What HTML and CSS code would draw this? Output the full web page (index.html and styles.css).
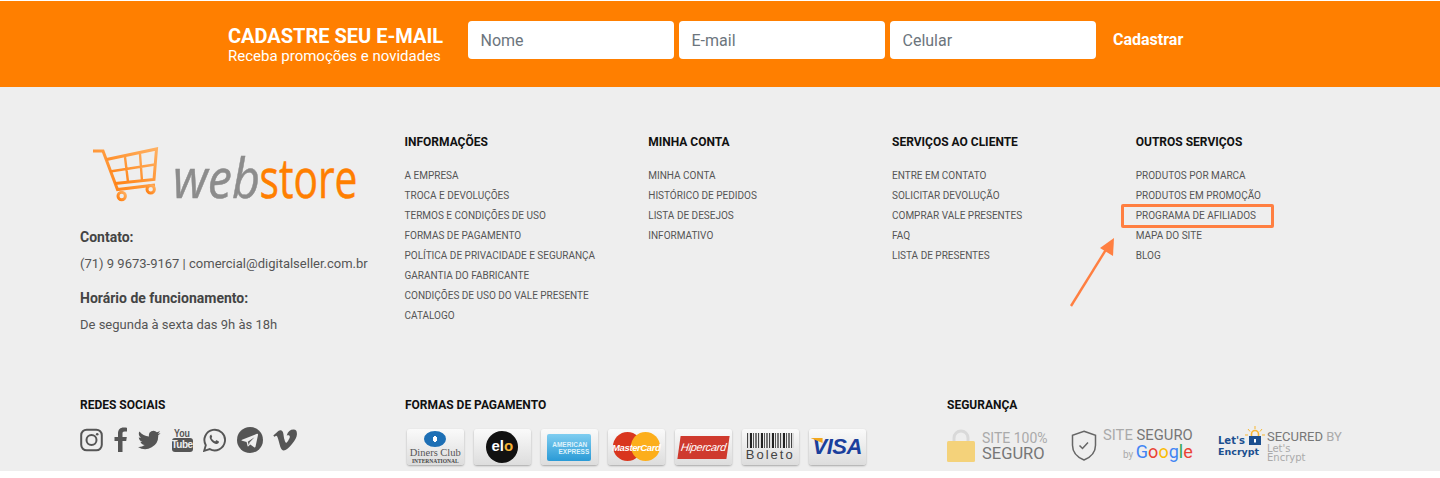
FILE: index.html
```html
<!DOCTYPE html>
<html lang="pt-BR">
<head>
  <meta charset="UTF-8">
  <title>Webstore</title>
  <link rel="stylesheet" href="styles.css">
</head>
<body>
  <!-- newsletter -->
  <section class="news">
    <div class="news-text">
      <h2>CADASTRE SEU E-MAIL</h2>
      <p>Receba promoções e novidades</p>
    </div>
    <form class="news-form">
      <input type="text" placeholder="Nome">
      <input type="text" placeholder="E-mail">
      <input type="text" placeholder="Celular">
      <button type="button">Cadastrar</button>
    </form>
  </section>

  <footer>
    <div class="top">
      <div class="about">
        <svg class="logo" width="280" height="60" viewBox="0 0 280 60">
          <defs>
            <linearGradient id="cart" x1="1" y1="0" x2="0" y2="1">
              <stop offset="0" stop-color="#ffb061"/>
              <stop offset="1" stop-color="#ff7f10"/>
            </linearGradient>
          </defs>
          <g fill="none" stroke="url(#cart)" stroke-width="3">
            <path d="M1 3h10l14.500 38.500L63 37"/>
            <path d="M14.500 11.500L64.500 1 62 31.500 23 35.500"/>
            <path d="M18 23.500L63 16.500M33 9l3 25M48 6l2 27" stroke-width="2.400"/>
            <circle cx="29.700" cy="48" r="3.700"/>
            <circle cx="58.700" cy="41.300" r="3.700"/>
          </g>
          <text x="81" y="50" class="logo-word logo-web" textLength="87" lengthAdjust="spacingAndGlyphs">web</text>
          <text x="167.500" y="50" class="logo-word logo-store" textLength="98" lengthAdjust="spacingAndGlyphs">store</text>
        </svg>
        <h4>Contato:</h4>
        <p>(71) 9 9673-9167 | comercial@digitalseller.com.br</p>
        <h4 class="hours">Horário de funcionamento:</h4>
        <p>De segunda à sexta das 9h às 18h</p>
      </div>

      <div class="col">
        <h5>Informações</h5>
        <ul>
          <li>A empresa</li>
          <li>Troca e devoluções</li>
          <li>Termos e condições de uso</li>
          <li>Formas de pagamento</li>
          <li>Política de privacidade e segurança</li>
          <li>Garantia do fabricante</li>
          <li>Condições de uso do vale presente</li>
          <li>Catalogo</li>
        </ul>
      </div>
      <div class="col">
        <h5>Minha conta</h5>
        <ul>
          <li>Minha conta</li>
          <li>Histórico de pedidos</li>
          <li>Lista de desejos</li>
          <li>Informativo</li>
        </ul>
      </div>
      <div class="col">
        <h5>Serviços ao cliente</h5>
        <ul>
          <li>Entre em contato</li>
          <li>Solicitar devolução</li>
          <li>Comprar vale presentes</li>
          <li>FAQ</li>
          <li>Lista de presentes</li>
        </ul>
      </div>
      <div class="col">
        <h5>Outros serviços</h5>
        <ul>
          <li>Produtos por marca</li>
          <li>Produtos em promoção</li>
          <li class="marked">Programa de afiliados</li>
          <li>Mapa do site</li>
          <li>Blog</li>
        </ul>
      </div>
    </div>

    <div class="bottom">
      <div class="social">
        <h5>Redes sociais</h5>
        <div class="icons">
          <svg width="23" height="24" viewBox="0 0 23 24"><rect x="1.200" y="1.700" width="20.600" height="20.600" rx="5.500" fill="none" stroke="#555" stroke-width="2"/><circle cx="11.500" cy="12" r="5" fill="none" stroke="#555" stroke-width="2"/><circle cx="17.200" cy="6.300" r="1.300" fill="#555"/></svg>
          <svg width="14" height="26" viewBox="0 0 14 26"><path d="M4 25V14H.500v-4H4V6.500C4 2.500 6.300.500 9.500.500c1.500 0 3 .1 3.500.2v3.800h-2.300c-1.800 0-2.200.9-2.200 2.100V10h4.300l-.6 4H8.500v11z" fill="#555"/></svg>
          <svg width="23" height="20" viewBox="0 0 24 20"><path d="M23.500 2.600c-.9.400-1.800.7-2.800.8 1-.6 1.800-1.500 2.100-2.700-.9.600-2 1-3.100 1.200A4.800 4.800 0 0 0 11.500 6.300C7.500 6.100 3.900 4.200 1.500 1.200.2 3.400.9 6.200 3 7.600c-.8 0-1.500-.2-2.200-.6 0 2.300 1.700 4.300 3.900 4.800-.7.200-1.500.2-2.200.1.600 2 2.400 3.300 4.500 3.400A9.700 9.700 0 0 1 0 17.300 13.700 13.700 0 0 0 21.100 5.100c1-.7 1.800-1.500 2.400-2.500z" fill="#555"/></svg>
          <span class="yt"><span class="yt-you">You</span><span class="yt-tube">Tube</span></span>
          <svg width="23" height="24" viewBox="0 0 23 24"><path d="M1.200 22.800l1.600-5.600a10.300 10.300 0 1 1 4 3.900z" fill="none" stroke="#555" stroke-width="1.900"/><path d="M8.400 6.700c-.5 0-1.300.3-1.600 1.400-.4 1.300.1 2.900 1.200 4.400 1.300 1.700 3 3 5 3.500 1.300.3 2.500-.4 2.800-1.400.2-.6.200-1 .1-1.200l-2.200-1.100c-.3-.1-.5 0-.7.200l-.8 1c-1.700-.7-3-1.900-3.800-3.400l.6-.8c.2-.2.200-.5.100-.7l-.9-2c-.1-.1-.3-.2-.5-.2z" fill="#555"/></svg>
          <svg width="26" height="26" viewBox="0 0 26 26"><circle cx="13" cy="13" r="13" fill="#555"/><path d="M5 12.700l15-5.900c.7-.2 1.200.2 1 1.100l-2.500 11.800c-.2.800-.7 1-1.400.6l-3.800-2.800-1.900 1.800c-.4.400-.8.300-.9-.2l-.9-4.100-4.500-1.300c-.9-.3-.9-.8 0-1z" fill="#eee"/><path d="M10.800 14.800l6.700-4.600-5 5.400-.6 2.700z" fill="#555"/></svg>
          <svg width="24" height="22" viewBox="0 0 24 22"><path d="M23.900 5.400c-.1 2.300-1.700 5.500-4.900 9.600-3.300 4.300-6 6.400-8.300 6.400-1.400 0-2.600-1.300-3.500-3.900L5.300 10.600C4.700 8 4 6.700 3.200 6.700c-.2 0-.8.400-1.800 1.100L.3 6.400 3.700 3.400C5.200 2.100 6.400 1.400 7.100 1.300c1.800-.2 2.900 1 3.300 3.600.4 2.900.8 4.700 1 5.400.5 2.300 1.100 3.500 1.700 3.500.5 0 1.200-.8 2.200-2.300.9-1.500 1.400-2.600 1.500-3.400.1-1.300-.4-1.900-1.500-1.900-.5 0-1.100.1-1.600.4C15 2.400 17.400.500 20.700.600c2.400.1 3.400 1.700 3.200 4.800z" fill="#555"/></svg>
        </div>
      </div>

      <div class="payment">
        <h5>Formas de pagamento</h5>
        <div class="cards">
          <div class="card diners">
            <span class="diners-logo"></span>
            <span class="diners-name">Diners Club</span>
            <span class="diners-sub">INTERNATIONAL</span>
          </div>
          <div class="card"><span class="elo">el<i>o</i></span></div>
          <div class="card"><span class="amex"><span>AMERICAN</span><span class="amex-low">EXPRESS</span></span></div>
          <div class="card">
            <span class="mc-red"></span><span class="mc-yellow"></span>
            <span class="mc-text">MasterCard</span>
          </div>
          <div class="card"><span class="hiper"><span>Hipercard</span></span></div>
          <div class="card boleto">
            <span class="bars"></span>
            <span class="boleto-text">Boleto</span>
          </div>
          <div class="card"><span class="visa">VISA</span></div>
        </div>
      </div>

      <div class="security">
        <h5>Segurança</h5>
        <div class="seals">
          <div class="seal seal-site">
            <svg width="28" height="33" viewBox="0 0 28 33"><path d="M7 14V9a7 7 0 0 1 14 0v5" fill="none" stroke="#d9d9d9" stroke-width="3"/><rect y="12" width="28" height="21" rx="1.500" fill="#f4d27a"/></svg>
            <div class="seal-text"><span class="light site-100">SITE 100%</span><span class="big">SEGURO</span></div>
          </div>
          <div class="seal seal-google">
            <svg width="26" height="31" viewBox="0 0 26 31"><path d="M13 1.200l11.500 4v10c0 7-4.800 12-11.500 14.800C6.300 27.200 1.500 22.200 1.500 15.200v-10z" fill="none" stroke="#666" stroke-width="1.500"/><path d="M8.500 15.500l3 3 5.500-6" fill="none" stroke="#666" stroke-width="1.500"/></svg>
            <div class="seal-text right">
              <span class="site-seguro"><span class="light">SITE</span> SEGURO</span>
              <span class="by">by <b class="g-blue">G</b><b class="g-red">o</b><b class="g-yellow">o</b><b class="g-blue">g</b><b class="g-green">l</b><b class="g-red">e</b></span>
            </div>
          </div>
          <div class="seal seal-le">
            <div class="le-logo">
              <span class="le-word">Let's</span>
              <svg class="le-lock" width="20" height="20" viewBox="0 0 20 20"><path d="M10 0v3M3 3l2 2.500M17 3l-2 2.500M0 9h3M17 9h3" stroke="#f7b733" stroke-width="1"/><path d="M6.500 10V8a3.500 3.500 0 0 1 7 0v2" fill="none" stroke="#f7b733" stroke-width="1.600"/><rect x="4" y="10" width="12" height="9" fill="#1b4f8f"/><rect x="9" y="13" width="2" height="3.500" fill="#fff"/></svg>
              <span class="le-word le-enc">Encrypt</span>
            </div>
            <div class="seal-text le-text"><span class="secured">SECURED <span class="light">BY</span></span><span class="le-small">Let's<br>Encrypt</span></div>
          </div>
        </div>
      </div>
    </div>
  </footer>

  <!-- seta de destaque -->
  <svg class="arrow" width="50" height="72" viewBox="0 0 50 72"><path d="M2 70L38 12" stroke="#ff7f41" stroke-width="2.400" fill="none"/><path d="M45 2l-1 18-13-8z" fill="#ff7f41"/></svg>
</body>
</html>
```

FILE: styles.css
```css
* {
  box-sizing: border-box;
  margin: 0;
  padding: 0;
}
body {
  position: relative;
  height: 478px;
  overflow: hidden;
  background: #fff;
  font-family: Roboto, sans-serif;
  color: #444;
}
/* newsletter */
.news {
  display: flex;
  align-items: center;
  height: 86px;
  margin-top: 1px;
  padding: 0 0 9px 228px;
  background: #ff7f00;
  color: #fff;
}
.news-text {
  width: 240px;
  margin-top: 9px;
}
.news-text h2 {
  font-size: 20px;
  line-height: 24px;
  font-weight: 700;
}
.news-text p {
  font-size: 15px;
  line-height: 17px;
}
.news-form {
  display: flex;
  gap: 5px;
}
.news-form input {
  width: 206px;
  height: 38px;
  padding: 2px 13px 0 12.500px;
  border: none;
  border-radius: 4px;
  background: #fff;
  font: 16px Roboto, sans-serif;
}
.news-form input::placeholder {
  color: #6c757d;
}
.news-form button {
  margin-left: 12px;
  border: none;
  background: none;
  color: #fff;
  font: 700 16px Roboto, sans-serif;
}
/* rodape */
footer {
  height: 384px;
  background: #eee;
}
.top {
  display: flex;
  height: 311px;
  padding: 48px 0 0 80px;
}
.about {
  width: 324.500px;
  font-size: 13px;
}
.logo {
  display: block;
  overflow: visible;
  margin: 13px 0 0 12px;
}
.logo-word {
  font-family: "Open Sans", sans-serif;
  font-size: 55px;
  stroke-width: .5px;
}
.logo-web {
  fill: #8c8c8c;
  stroke: #8c8c8c;
  font-style: italic;
}
.logo-store {
  fill: #ff7f00;
  stroke: #ff7f00;
}
.about h4 {
  margin-top: 19px;
  font-size: 14px;
  line-height: 20px;
  color: #444;
}
.about p {
  margin-top: 7px;
  line-height: 20px;
  color: #555;
}
.about .hours {
  margin-top: 14px;
}
.col {
  width: 243.750px;
}
h5 {
  font-size: 12px;
  line-height: 14px;
  font-weight: 700;
  color: #111;
  text-transform: uppercase;
}
.col ul {
  margin-top: 17px;
  list-style: none;
}
.col li {
  height: 20px;
  font-size: 10px;
  line-height: 20px;
  color: #555;
  text-transform: uppercase;
}
.marked {
  position: relative;
}
.marked::after {
  content: "";
  position: absolute;
  left: -15px;
  top: -2px;
  box-sizing: border-box;
  width: 153px;
  height: 24px;
  border: 3px solid #ff7f41;
  border-radius: 2px;
}
.arrow {
  position: absolute;
  left: 1069px;
  top: 236px;
}
/* linha de baixo */
.bottom {
  display: flex;
  padding-left: 80px;
}
.social {
  width: 325px;
}
.icons {
  display: flex;
  align-items: center;
  gap: 10.500px;
  height: 28px;
  margin-top: 14px;
}
.yt {
  display: flex;
  flex-direction: column;
  align-items: center;
  width: 21px;
  font-family: "Liberation Sans Narrow", "Liberation Sans", sans-serif;
  font-weight: 700;
  color: #555;
}
.yt-you {
  font-size: 11px;
  line-height: 10px;
  transform: scaleX(.8);
}
.yt-tube {
  width: 21px;
  border-radius: 3px;
  background: #555;
  color: #eee;
  font-size: 10px;
  line-height: 14px;
  text-align: center;
  letter-spacing: -.5px;
}
.payment {
  width: 542px;
}
.cards {
  display: flex;
  gap: 10.500px;
  margin: 17px 0 0 2px;
}
.card {
  position: relative;
  display: flex;
  align-items: center;
  justify-content: center;
  width: 56.500px;
  height: 36px;
  overflow: hidden;
  border-radius: 3px;
  background: linear-gradient(#fafafa, #ddd);
  box-shadow: 0 1px 2px rgba(0, 0, 0, .3);
}
.diners {
  flex-direction: column;
  line-height: 1;
}
.diners-logo {
  width: 22px;
  height: 16px;
  border-radius: 50%;
  background: radial-gradient(ellipse 4px 7px, #fff 45%, #1d6fb5 50%);
}
.diners-name {
  font: 10.500px/11px "Liberation Serif", serif;
  color: #555;
}
.diners-sub {
  font: 700 5.500px/6px "Liberation Serif", serif;
  color: #444;
}
.elo {
  width: 32px;
  height: 32px;
  border-radius: 50%;
  background: #111;
  color: #fff;
  font: 700 15px/30px "Liberation Sans", sans-serif;
  text-align: center;
}
.elo i {
  color: #f5b335;
  font-style: normal;
}
.amex {
  display: flex;
  flex-direction: column;
  width: 44px;
  height: 27px;
  padding: 7px 2px 0 5px;
  border-radius: 2px;
  background: linear-gradient(#7fcdf0, #2a9ad6);
  color: #dff2fb;
  font: 700 6.500px/7px "Liberation Sans", sans-serif;
}
.amex-low {
  align-self: flex-end;
}
.mc-red,
.mc-yellow {
  position: absolute;
  top: 3px;
  width: 29px;
  height: 29px;
  border-radius: 50%;
}
.mc-red {
  left: 5px;
  background: #d9361e;
}
.mc-yellow {
  right: 5px;
  background: #fcae1b;
}
.mc-text {
  position: relative;
  color: #fff;
  font: italic 700 9.500px "Liberation Sans", sans-serif;
  letter-spacing: -.4px;
}
.hiper {
  width: 49px;
  height: 23px;
  background: #cf3a2e;
  color: #fff;
  font: italic 400 11px/23px "Liberation Sans", sans-serif;
  letter-spacing: -.3px;
  text-align: center;
  transform: skewX(-8deg);
}
.boleto {
  flex-direction: column;
}
.bars {
  width: 47px;
  height: 15px;
  background: repeating-linear-gradient(90deg, #444 0 1px, #ddd 1px 3px, #222 3px 5px, #eee 5px 6px, #555 6px 7px, #eee 7px 8px, #777 8px 10px, #eee 10px 11px);
}
.boleto-text {
  font: 13px/14px "Liberation Sans", sans-serif;
  color: #444;
  letter-spacing: 2px;
}
.visa {
  position: relative;
  color: #1a3f9c;
  font: italic 700 22px "Liberation Sans", sans-serif;
  letter-spacing: -.5px;
}
.visa::before {
  content: "";
  position: absolute;
  left: -2px;
  top: 4px;
  width: 12px;
  height: 5px;
  background: #f2a81d;
  clip-path: polygon(0 0, 100% 0, 100% 100%);
}
.seals {
  display: flex;
  align-items: center;
  margin-top: 16px;
}
.seal {
  display: flex;
  align-items: center;
  gap: 7px;
  color: #777;
}
.seal-site {
  width: 124px;
}
.seal-google {
  width: 147px;
  gap: 6px;
}
.seal-text {
  display: flex;
  flex-direction: column;
}
.seal-text.right {
  align-items: flex-end;
}
.light {
  color: #aaa;
}
.seal-site .seal-text {
  line-height: 15px;
}
.site-100 {
  font-size: 14px;
}
.big {
  font-size: 16.500px;
}
.site-seguro {
  font-size: 14.800px;
  line-height: 15px;
}
.by {
  font-size: 10px;
  line-height: 17px;
  color: #aaa;
}
.by b {
  font-size: 18px;
  font-weight: 400;
}
.g-blue { color: #4285f4; }
.g-red { color: #ea4335; }
.g-yellow { color: #fbbc05; }
.g-green { color: #34a853; }
.le-logo {
  display: grid;
  grid-template-columns: auto auto;
  width: 44px;
  color: #1b4f8f;
  font: 700 10px/11px "DejaVu Sans", sans-serif;
}
.le-lock {
  margin-top: -9px;
}
.le-enc {
  grid-column: 1 / 3;
  font-size: 9.500px;
}
.seal-le {
  gap: 5px;
}
.secured {
  font-size: 13px;
  line-height: 14px;
}
.le-small {
  font: 10px/9px "DejaVu Sans", sans-serif;
  color: #aaa;
}
```
